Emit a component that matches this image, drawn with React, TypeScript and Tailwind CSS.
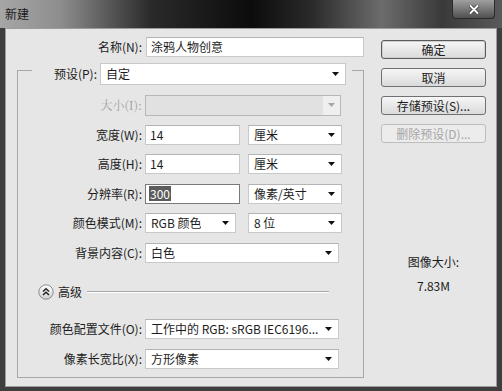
import React from 'react'

function Arrow({ disabled = false }: { disabled?: boolean }) {
  return (
    <svg width="7" height="4" viewBox="0 0 7 4" className="shrink-0">
      <path d="M0 0H7L3.5 4Z" fill={disabled ? '#a8a8a8' : '#111'} />
    </svg>
  )
}

function Input({ value, w, focused = false }: { value: string; w: string; focused?: boolean }) {
  return (
    <div
      className={`${w} flex h-[20px] items-center border bg-white pl-[3px] ${
        focused ? 'border-[#7a7a7a]' : 'border-[#c9c9c9] border-t-[#b4b4b4]'
      }`}
    >
      {focused ? (
        <span className="bg-[#5b5b5b] px-[1px] leading-[15px] text-white">{value}</span>
      ) : (
        <span className="pl-[1px]">{value}</span>
      )}
    </div>
  )
}

function Select({ value, w }: { value: string; w: string }) {
  return (
    <div className={`${w} flex h-[20px] items-center justify-between border border-[#c9c9c9] border-t-[#b4b4b4] bg-white pl-[5px] pr-[6px]`}>
      <span className="truncate">{value}</span>
      <Arrow />
    </div>
  )
}

function Row({ label, children, disabled = false }: { label: string; children: React.ReactNode; disabled?: boolean }) {
  return (
    <div className="flex h-[20px] items-center gap-[3px]">
      <div className={`w-[124px] text-right ${disabled ? "font-['Noto_Serif_CJK_SC','Liberation_Serif','Noto_Sans_CJK_SC',serif] text-[#a3a3a3]" : ''}`}>
        {label}
      </div>
      {children}
    </div>
  )
}

function Button({ label, primary = false, disabled = false }: { label: string; primary?: boolean; disabled?: boolean }) {
  return (
    <div
      className={`flex h-[19px] w-[105px] items-center justify-center rounded-[3px] border ${
        disabled
          ? 'border-[#bdbdbd] bg-[#ececec] text-[#a6a6a6]'
          : primary
            ? 'border-[#5a5a5a] bg-[linear-gradient(to_bottom,#f6f6f6,#dadada)] shadow-[inset_0_0_0_1px_#d0d0d0]'
            : 'border-[#707070] bg-[linear-gradient(to_bottom,#f6f6f6,#dadada)]'
      }`}
    >
      {label}
    </div>
  )
}

export default function App() {
  return (
    <div className="flex h-[391px] w-[502px] flex-col overflow-hidden bg-[#3e3e3e] font-['Noto_Sans_CJK_SC',sans-serif] text-[12px] text-[#1c1c1c]">
      {/* Title bar */}
      <div className="flex h-[28px] shrink-0 items-start bg-[linear-gradient(to_right,#a6a6a6_0%,#8e8e8e_12%,#2a2a2a_30%,#0c0c0c_50%,#2a2a2a_62%,#6c6c6c_76%,#3a3a3a_88%,#5a5a5a_100%)]">
        <span className="pl-[5px] pt-[6px] leading-[16px] text-[#1a1a1a]">新建</span>
        <div className="ml-auto mr-[7px] flex h-[19px] w-[43px] items-center justify-center rounded-b-[4px] border border-t-0 border-[#2a2a2a] bg-[linear-gradient(to_bottom,#a0a0a0,#505050)]">
          <svg width="10" height="9" viewBox="0 0 10 9">
            <path d="M1.5 1L8.5 8M8.5 1L1.5 8" stroke="#303030" strokeWidth="3.4" strokeLinecap="round" />
            <path d="M1.5 1L8.5 8M8.5 1L1.5 8" stroke="#ffffff" strokeWidth="2" strokeLinecap="round" />
          </svg>
        </div>
      </div>

      {/* Body */}
      <div className="mx-[5px] mb-[4px] flex flex-1 border border-[#9c9c9c] bg-[#e6e6e6]">
        {/* Left column */}
        <div className="flex w-[358px] flex-col pt-[8px]">
          <div className="flex h-[20px] items-center gap-[4px]">
            <div className="w-[136px] text-right">名称(N):</div>
            <Input value="涂鸦人物创意" w="w-[218px]" />
          </div>

          {/* Group box */}
          <div className="ml-[11px] mt-[13px] flex h-[308px] w-[347px] flex-col border border-[#a8a8a8]">
            <div className="-mt-[8px] ml-[14px] flex h-[22px] w-[320px] items-center justify-end gap-[3px] bg-[#e6e6e6] pr-[6px]">
              <span>预设(P):</span>
              <div className="flex h-[22px] w-[246px] items-center justify-between border border-[#c9c9c9] bg-white pl-[5px] pr-[6px]">
                <span>自定</span>
                <Arrow />
              </div>
            </div>

            <div className="mt-[10px] flex flex-col gap-[9.6px]">
              <Row label="大小(I):" disabled>
                <div className="flex h-[21px] w-[196px] items-stretch justify-end border border-[#b8b8b8] bg-[#e1e1e1]">
                  <div className="flex w-[17px] items-center justify-center bg-[#efefef]">
                    <Arrow disabled />
                  </div>
                </div>
              </Row>
              <Row label="宽度(W):">
                <Input value="14" w="w-[95px]" />
                <div className="w-[2px]" />
                <Select value="厘米" w="w-[94px]" />
              </Row>
              <Row label="高度(H):">
                <Input value="14" w="w-[95px]" />
                <div className="w-[2px]" />
                <Select value="厘米" w="w-[94px]" />
              </Row>
              <Row label="分辨率(R):">
                <Input value="300" w="w-[95px]" focused />
                <div className="w-[2px]" />
                <Select value="像素/英寸" w="w-[94px]" />
              </Row>
              <Row label="颜色模式(M):">
                <Select value="RGB 颜色" w="w-[91px]" />
                <div className="w-[6px]" />
                <Select value="8 位" w="w-[94px]" />
              </Row>
              <Row label="背景内容(C):">
                <Select value="白色" w="w-[194px]" />
              </Row>
            </div>

            {/* Advanced */}
            <div className="ml-[20px] mt-[21px] flex h-[16px] items-center">
              <svg width="16" height="16" viewBox="0 0 16 16">
                <defs>
                  <linearGradient id="adv" x1="0" y1="0" x2="0" y2="1">
                    <stop offset="0" stopColor="#ffffff" />
                    <stop offset="1" stopColor="#cfcfcf" />
                  </linearGradient>
                </defs>
                <circle cx="8" cy="8" r="7.2" fill="url(#adv)" stroke="#8a8a8a" strokeWidth="1" />
                <path d="M5 7.5L8 4.8L11 7.5M5 11L8 8.3L11 11" fill="none" stroke="#222" strokeWidth="1.5" />
              </svg>
              <span className="ml-[4px]">高级</span>
              <div className="ml-[5px] h-[2px] w-[242px] border-t border-b border-t-[#a6a6a6] border-b-white" />
            </div>

            <div className="mt-[19px] flex flex-col gap-[10px]">
              <Row label="颜色配置文件(O):">
                <Select value="工作中的 RGB: sRGB IEC6196..." w="w-[194px]" />
              </Row>
              <Row label="像素长宽比(X):">
                <Select value="方形像素" w="w-[194px]" />
              </Row>
            </div>
          </div>
        </div>

        {/* Right column */}
        <div className="ml-[17px] flex flex-col pt-[11px]">
          <div className="flex flex-col gap-[9px]">
            <Button label="确定" primary />
            <Button label="取消" />
            <Button label="存储预设(S)..." />
            <Button label="删除预设(D)..." disabled />
          </div>
          <div className="mt-[107px] flex w-[105px] flex-col items-center leading-[24px]">
            <span>图像大小:</span>
            <span>7.83M</span>
          </div>
        </div>
      </div>
    </div>
  )
}
